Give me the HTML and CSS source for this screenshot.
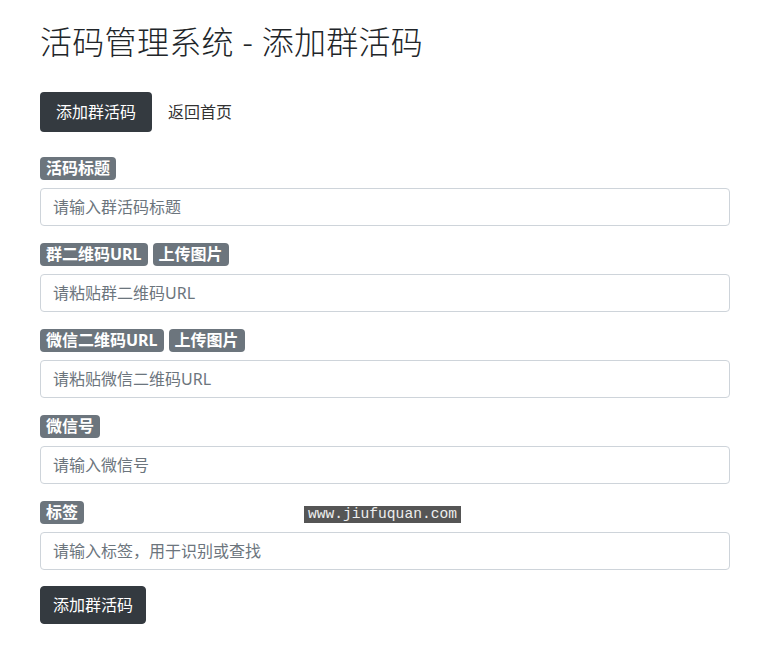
FILE: index.html
```
<!DOCTYPE html>
<html lang="zh-CN">
<head>
    <meta charset="UTF-8">
    <meta name="viewport" content="width=device-width, initial-scale=1.0">
    <title>活码管理系统 - 添加群活码</title>
    <link rel="stylesheet" href="styles.css">
</head>
<body>
    <div class="container">
        <h2 class="page-title">活码管理系统 - 添加群活码</h2>

        <div class="nav">
            <a class="nav-btn active" href="#">添加群活码</a>
            <a class="nav-btn" href="#">返回首页</a>
        </div>

        <form class="qun-form" onsubmit="return false;">
            <div class="form-group">
                <div class="label-row">
                    <span class="badge">活码标题</span>
                </div>
                <input type="text" class="form-control" placeholder="请输入群活码标题">
            </div>

            <div class="form-group">
                <div class="label-row">
                    <span class="badge">群二维码URL</span>
                    <span class="badge">上传图片</span>
                </div>
                <input type="text" class="form-control" placeholder="请粘贴群二维码URL">
            </div>

            <div class="form-group">
                <div class="label-row">
                    <span class="badge">微信二维码URL</span>
                    <span class="badge">上传图片</span>
                </div>
                <input type="text" class="form-control" placeholder="请粘贴微信二维码URL">
            </div>

            <div class="form-group">
                <div class="label-row">
                    <span class="badge">微信号</span>
                </div>
                <input type="text" class="form-control" placeholder="请输入微信号">
            </div>

            <div class="form-group last">
                <div class="label-row">
                    <span class="badge">标签</span>
                </div>
                <input type="text" class="form-control" placeholder="请输入标签，用于识别或查找">
            </div>

            <button class="submit-btn">添加群活码</button>
        </form>
    </div>

    <div class="watermark">www.jiufuquan.com</div>
</body>
</html>
```

FILE: styles.css
```
body {
    margin: 0;
    background: #fff;
    color: #212529;
    font-family: "Noto Sans", "Noto Sans CJK SC", sans-serif;
    font-size: 16px;
    line-height: 1.5;
}
.container {
    width: 690px;
    margin-left: 40px;
}
.page-title {
    margin: 23px 0 0;
    font-size: 32px;
    font-weight: 300;
    line-height: 1.2;
    letter-spacing: 0.3px;
    color: #212529;
}
.nav {
    display: flex;
    margin-top: 31px;
}
.nav-btn {
    display: block;
    padding: 7px 15px;
    border: 1px solid transparent;
    border-radius: 4px;
    color: #333;
    text-decoration: none;
    font-size: 16px;
    line-height: 24px;
}
.nav-btn.active {
    background-color: #343a40;
    color: #fff;
}
.qun-form {
    margin-top: 25px;
}
.form-group {
    margin-bottom: 17px;
}
.form-group.last {
    margin-bottom: 16px;
}
.label-row {
    display: flex;
    gap: 5px;
    margin-bottom: 8px;
}
.badge {
    display: inline-block;
    padding: 0 6px;
    height: 23px;
    line-height: 23px;
    font-size: 16px;
    font-weight: 700;
    color: #fff;
    background-color: #6c757d;
    border-radius: 4px;
}
.form-control {
    display: block;
    box-sizing: border-box;
    width: 100%;
    height: 38px;
    padding: 6px 12px;
    font-family: inherit;
    font-size: 16px;
    color: #495057;
    border: 1px solid #ced4da;
    border-radius: 4px;
    outline: none;
}
.form-control::placeholder {
    color: #6c757d;
}
.submit-btn {
    display: block;
    box-sizing: border-box;
    height: 38px;
    padding: 6px 12px;
    background-color: #343a40;
    color: #fff;
    border: 1px solid #343a40;
    border-radius: 4px;
    font-family: inherit;
    font-size: 16px;
    line-height: 24px;
    cursor: pointer;
}
.watermark {
    position: absolute;
    left: 304px;
    top: 506px;
    width: 157px;
    height: 17px;
    background: #555;
    color: #eee;
    font-family: "Liberation Mono", monospace;
    font-size: 14.6px;
    line-height: 17px;
    text-align: center;
}
```
